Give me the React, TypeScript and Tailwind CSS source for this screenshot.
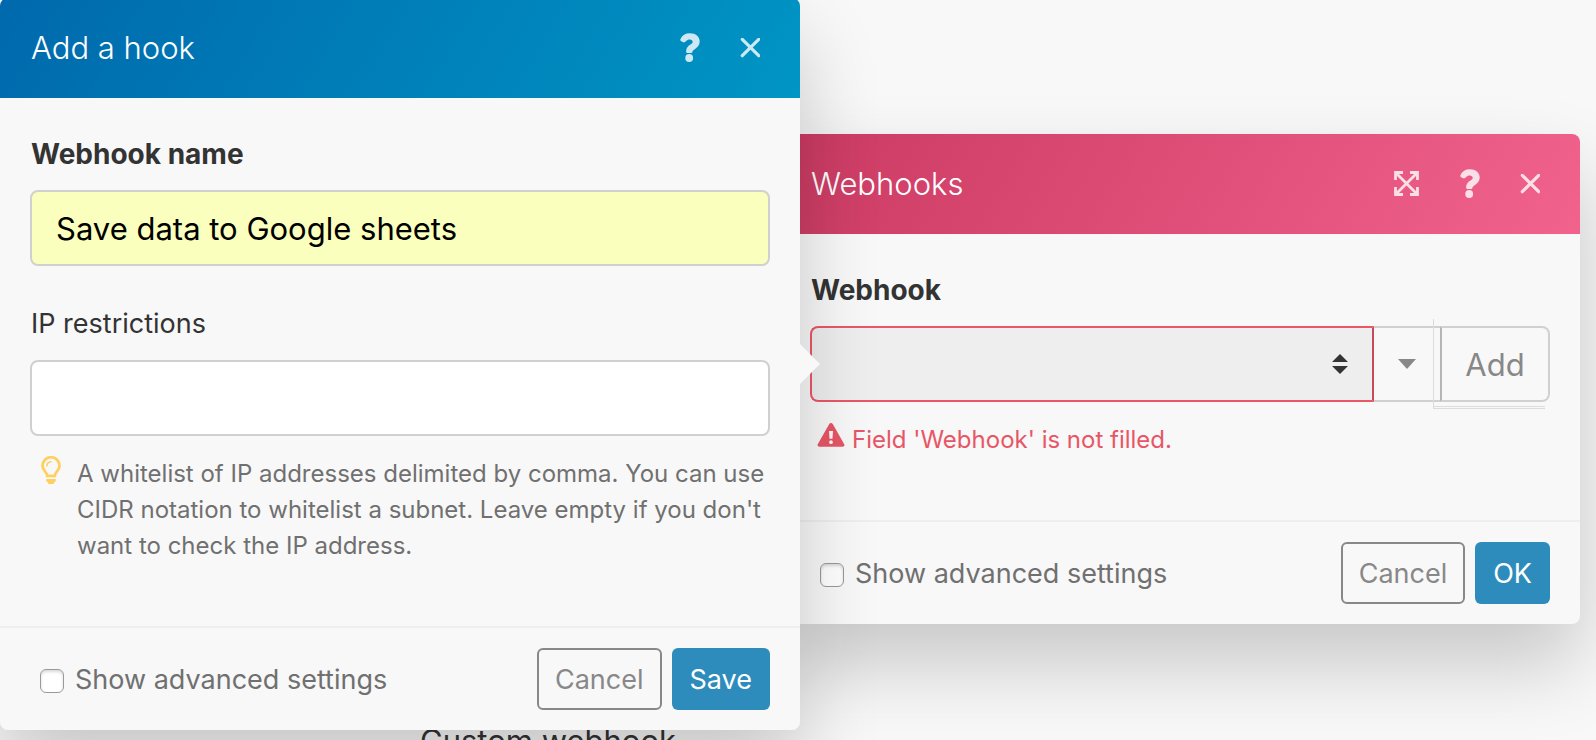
import type { ReactNode } from 'react';

const CloseIcon = () => (
  <svg width="20" height="20" viewBox="0 0 20 20" fill="none" aria-hidden="true">
    <path
      d="M2.300 1.300 18.700 17.700M18.700 1.300 2.300 17.700"
      stroke="currentColor"
      strokeWidth="3.200"
      strokeLinecap="round"
    />
  </svg>
);

const HelpIcon = () => (
  <svg width="20" height="30" viewBox="0 0 20 30" aria-hidden="true">
    <path
      fill="currentColor"
      d="M.4 6.200C2.200 2.300 5.400 .3 9.700 .3c6 0 10 3.400 10 8.300 0 3.700-2.100 5.900-5.300 7.900-1.500.9-1.900 1.500-2 2.500-.1.600-.5.900-1.100.9H7.300c-.8 0-1.200-.4-1.200-1.200 0-3.400 1.500-5.400 4.400-7.100 1.600-1 2.200-1.700 2.200-2.800 0-1.500-1.200-2.400-3-2.400-1.700 0-2.700.6-3.700 1.900C5.100 9.300 4 9.700 2.700 9.100.8 8.300-.1 7.400.4 6.200Z"
    />
    <circle cx="9.200" cy="25" r="3.900" fill="currentColor" />
  </svg>
);

const ExpandIcon = () => (
  <svg width="26" height="26" viewBox="0 0 26 26" fill="none" stroke="currentColor" aria-hidden="true">
    <path
      d="M9 1.500H1.500V9M16 1.500h7.500V9M9 23.500H1.500V16M16 23.500h7.500V16M2 2l21 21M23 2 2 23"
      strokeWidth="2.800"
    />
  </svg>
);

const BulbIcon = () => (
  <svg width="20" height="28" viewBox="0 0 20 28" fill="none" aria-hidden="true">
    <path
      d="M6.200 19.800c0-3.700-4.700-5-4.700-10.100a8.500 8.500 0 0 1 17 0c0 5.100-4.700 6.400-4.700 10.100Z"
      stroke="currentColor"
      strokeWidth="2.800"
    />
    <path d="M5.800 9.800A4.600 4.600 0 0 1 10 5.700" stroke="currentColor" strokeWidth="1.600" strokeLinecap="round" />
    <path d="M5.200 23h9.600v2.300l-1.500 1-.7 1.700H7.400l-.7-1.700-1.500-1Z" fill="currentColor" />
  </svg>
);

const WarningIcon = () => (
  <svg width="28" height="26" viewBox="0 0 28 26" aria-hidden="true">
    <path
      fill="currentColor"
      fillRule="evenodd"
      d="M12.100 2.200a2.200 2.200 0 0 1 3.800 0l11.200 19.700c.9 1.500 0 2.900-1.600 2.900h-23c-1.600 0-2.500-1.400-1.600-2.900ZM12 9l.5 7.800h3L16 9Zm2 9.300a1.900 1.900 0 1 0 0 3.800 1.900 1.900 0 0 0 0-3.800Z"
    />
  </svg>
);

type DialogProps = {
  title: string;
  headerClass: string;
  className: string;
  expandable?: boolean;
  submit: string;
  advancedId: string;
  children: ReactNode;
};

const Dialog = ({
  title,
  headerClass,
  className,
  expandable,
  submit,
  advancedId,
  children,
}: DialogProps) => {
  return (
    <section
      aria-label={title}
      className={`relative min-w-0 flex-1 rounded-lg bg-[#f8f8f8] shadow-[0_40px_80px_rgba(0,0,0,0.2)] ${className}`}
    >
      <header
        className={`flex h-[100px] items-center justify-between rounded-t-lg pr-10 pl-[31px] text-white ${headerClass}`}
      >
        <h2 className="text-[31px] font-light">{title}</h2>
        <div className="flex items-center gap-10 text-white/80">
          {expandable && (
            <button type="button" aria-label="Expand">
              <ExpandIcon />
            </button>
          )}
          <button type="button" aria-label="Help">
            <HelpIcon />
          </button>
          <button type="button" aria-label="Close">
            <CloseIcon />
          </button>
        </div>
      </header>
      <div className="px-[30px] pt-9 pb-[62px]">{children}</div>
      <footer className="flex items-center justify-between border-t-2 border-[#eee] px-[30px] py-5">
        <div className="flex items-center gap-[11px] pt-0.5 pl-2.5">
          <input
            id={advancedId}
            type="checkbox"
            className="mt-0.5 size-6 appearance-none rounded-md border border-[#999] bg-white shadow-[inset_0_2px_3px_rgba(0,0,0,0.15)]"
          />
          <label htmlFor={advancedId} className="text-[27px] text-[#707070]">
            Show advanced settings
          </label>
        </div>
        <div className="flex gap-2.5 text-[27px]">
          <button
            type="button"
            className="h-[62px] rounded-md border-2 border-[#888] px-4 pt-0.5 text-[#888]"
          >
            Cancel
          </button>
          <button
            type="button"
            className="h-[62px] rounded-md bg-[#2d8cbb] px-[18px] pt-0.5 text-white"
          >
            {submit}
          </button>
        </div>
      </footer>
    </section>
  );
};

const App = () => {
  return (
    <main className="h-screen overflow-hidden bg-[#f8f8f8] font-['Inter',sans-serif] text-[#333]">
      <div className="flex items-start pr-4">
        <Dialog
          title="Add a hook"
          headerClass="bg-[linear-gradient(120deg,#0069ad,#0095c4)]"
          className="z-10 -mt-0.5"
          submit="Save"
          advancedId="hook-advanced"
        >
          <label htmlFor="hook-name" className="mb-4 block pl-px text-[28px] leading-10 font-bold">
            Webhook name
          </label>
          <input
            id="hook-name"
            type="text"
            defaultValue="Save data to Google sheets"
            className="h-[76px] w-full rounded-lg border-2 border-[#d0d0d0] bg-[#faffbd] px-6 text-[31px] text-black"
          />
          <label htmlFor="hook-ip" className="mt-[38px] mb-4 block pl-px text-[27px] leading-10">
            IP restrictions
          </label>
          <input
            id="hook-ip"
            type="text"
            className="h-[76px] w-full rounded-lg border-2 border-[#d0d0d0] bg-white px-6 text-[31px]"
          />
          <div className="mt-5 flex gap-4 pl-[11px]">
            <span className="shrink-0 text-[#ffcf60]">
              <BulbIcon />
            </span>
            <p className="text-2xl leading-9 text-[#707070]">
              A whitelist of IP addresses delimited by comma. You can use CIDR notation to whitelist
              a subnet. Leave empty if you don't want to check the IP address.
            </p>
          </div>
          <span
            aria-hidden="true"
            className="absolute top-[346px] left-full border-y-20 border-l-20 border-y-transparent border-l-[#f8f8f8]"
          />
        </Dialog>
        <Dialog
          title="Webhooks"
          headerClass="bg-[linear-gradient(120deg,#cb3a62,#f1628d)]"
          className="mt-[134px] -ml-5"
          expandable
          submit="OK"
          advancedId="webhooks-advanced"
        >
          <label htmlFor="webhook" className="mb-4 block pl-px text-[28px] leading-10 font-bold">
            Webhook
          </label>
          <div className="relative flex h-[76px]">
            <div className="relative flex-1">
              <select
                id="webhook"
                className="size-full appearance-none rounded-l-lg border-2 border-[#eb5767] border-r-[#c54b59] bg-[#eee]"
              />
              <svg
                width="16"
                height="20"
                viewBox="0 0 16 20"
                fill="#333"
                aria-hidden="true"
                className="pointer-events-none absolute top-7 right-[26px]"
              >
                <path d="M8 0 16 8H0ZM0 12h16l-8 8Z" />
              </svg>
            </div>
            <button
              type="button"
              aria-label="More options"
              className="flex w-[66px] items-center justify-center border-y-2 border-[#d0d0d0]"
            >
              <svg width="18" height="10" viewBox="0 0 18 10" fill="#888" aria-hidden="true">
                <path d="M0 0h18L9 10Z" />
              </svg>
            </button>
            <button
              type="button"
              className="w-[110px] rounded-r-lg border-2 border-[#d0d0d0] border-l-[#b5b5b5] pt-0.5 text-[31px] text-[#888]"
            >
              Add
            </button>
            <span
              aria-hidden="true"
              className="pointer-events-none absolute -top-[7px] right-[5px] h-[90px] w-28 border-b-3 border-l border-double border-[#dcdcdc]"
            />
          </div>
          <p className="mt-5 flex gap-[7px] pl-[7px] text-2xl leading-9 text-[#e75666]">
            <WarningIcon />
            Field 'Webhook' is not filled.
          </p>
        </Dialog>
      </div>
      <p className="-mt-3 pl-[420px] text-[31px]">Custom webhook</p>
    </main>
  );
};

export default App;
